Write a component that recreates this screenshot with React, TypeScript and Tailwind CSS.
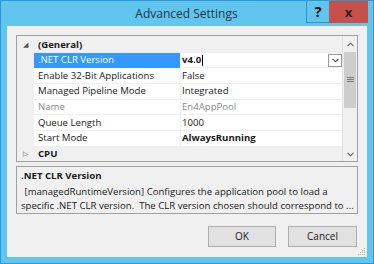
import React from "react";

const rows: { name: string; value: string; selected?: boolean; dim?: boolean; bold?: boolean }[] = [
  { name: ".NET CLR Version", value: "v4.0", selected: true, bold: true },
  { name: "Enable 32-Bit Applications", value: "False" },
  { name: "Managed Pipeline Mode", value: "Integrated" },
  { name: "Name", value: "En4AppPool", dim: true },
  { name: "Queue Length", value: "1000" },
  { name: "Start Mode", value: "AlwaysRunning", bold: true },
];

export default function App() {
  return (
    <div
      className="w-[374px] h-[264px] bg-[#62c5ee] border border-[#2a98da] flex flex-col text-[#1a1a1a]"
      style={{ fontFamily: '"Open Sans", "Noto Sans", sans-serif' }}
    >
      {/* Title bar */}
      <div className="h-[25px] flex items-start shrink-0">
        <div className="flex-1 text-center text-[12px] text-[#1c3448] leading-[25px] pl-[66px]">Advanced Settings</div>
        <div className="flex items-start pr-[5px]">
          <div className="w-[23px] h-[22px] border-l border-b border-[#3a8fbf] flex items-center justify-center text-[15px] font-bold text-[#111] leading-none">?</div>
          <div className="w-[39px] h-[22px] bg-[#c7504b] flex items-center justify-center text-[13px] font-bold text-[#222] leading-none">x</div>
        </div>
      </div>
      {/* Client */}
      <div className="mx-[6px] mb-[6px] flex-1 bg-[#f0f0f0] flex flex-col px-[9px] pt-[9px] relative">
        {/* Property grid */}
        <div className="h-[127px] border border-[#a0a0a0] bg-white flex overflow-hidden">
          <div className="flex-1 flex flex-col text-[9.6px] pt-[1px] bg-[#f0f0f0]">
            <div className="h-[15.7px] shrink-0 flex items-center bg-[#f0f0f0]">
              <div className="w-[17px] flex justify-center text-[7px] text-[#555]">◢</div>
              <div className="font-bold pl-[4px]">(General)</div>
            </div>
            {rows.map((r) => (
              <div key={r.name} className="h-[15.7px] shrink-0 flex bg-white">
                <div className="w-[17px] bg-[#f0f0f0]" />
                <div
                  className={
                    "w-[146px] flex items-center pl-[4px] border-b " +
                    (r.selected ? "bg-[#3399ff] text-white border-[#3399ff]" : "border-[#f0f0f0] ") +
                    (r.dim ? " text-[#8a8a8a]" : "")
                  }
                >
                  {r.name}
                </div>
                <div
                  className={
                    "flex-1 flex items-center pl-[1px] border-b border-l border-[#f0f0f0] " +
                    (r.bold ? "font-bold " : "") +
                    (r.dim ? "text-[#8a8a8a]" : "")
                  }
                >
                  {r.value}
                  {r.selected && (
                    <>
                      <span className="w-px h-[11px] bg-black ml-[1px]" />
                      <span className="ml-auto mr-0 w-[14px] h-[13px] border border-[#9a9a9a] bg-white flex items-center justify-center">
                        <svg width="7" height="5" viewBox="0 0 7 5">
                          <path d="M0.5 0.8 L3.5 3.8 L6.5 0.8" fill="none" stroke="#555" strokeWidth="1.1" />
                        </svg>
                      </span>
                    </>
                  )}
                </div>
              </div>
            ))}
            <div className="h-[15.7px] shrink-0 flex items-center bg-[#f0f0f0]">
              <div className="w-[17px] flex justify-center text-[7px] text-[#555]">▷</div>
              <div className="font-bold pl-[4px]">CPU</div>
            </div>
          </div>
          {/* Scrollbar */}
          <div className="w-[15px] bg-[#f0f0f0] border-l border-[#e3e3e3] flex flex-col">
            <div className="h-[16px] flex items-center justify-center">
              <svg width="7" height="5" viewBox="0 0 7 5">
                <path d="M0.5 4.2 L3.5 1.2 L6.5 4.2" fill="none" stroke="#606060" strokeWidth="1.1" />
              </svg>
            </div>
            <div className="mx-[1px] h-[56px] bg-[#cdcdcd] flex items-center justify-center">
              <svg width="7" height="6" viewBox="0 0 7 6">
                <path d="M0 0.5 H7 M0 2.5 H7 M0 4.5 H7" stroke="#7a7a7a" strokeWidth="1" />
              </svg>
            </div>
            <div className="flex-1" />
            <div className="h-[14px] flex items-center justify-center">
              <svg width="7" height="5" viewBox="0 0 7 5">
                <path d="M0.5 0.8 L3.5 3.8 L6.5 0.8" fill="none" stroke="#606060" strokeWidth="1.1" />
              </svg>
            </div>
          </div>
        </div>
        {/* Description */}
        <div className="mt-[4px] h-[48px] border border-[#a0a0a0] bg-[#f0f0f0] px-[4px] pt-[2px] text-[9.6px] leading-[14px]">
          <div className="font-bold">.NET CLR Version</div>
          <div className="pl-[1px] mt-[2px]">&nbsp;[managedRuntimeVersion] Configures the application pool to load a</div>
          <div className="whitespace-pre">specific .NET CLR version.  The CLR version chosen should correspond to ...</div>
        </div>
        {/* Buttons */}
        <div className="flex justify-end gap-[12px] mt-[12px] pr-[1px]">
          <div className="w-[68px] h-[21px] border border-[#adadad] bg-[#e1e1e1] flex items-center justify-center text-[10px]">OK</div>
          <div className="w-[69px] h-[21px] border border-[#adadad] bg-[#e1e1e1] flex items-center justify-center text-[10px]">Cancel</div>
        </div>
        {/* Resize grip */}
        <svg className="absolute right-[1px] bottom-[1px]" width="8" height="8" viewBox="0 0 8 8">
          <g fill="#b8b8b8">
            <rect x="6" y="0" width="1" height="1" />
            <rect x="4" y="2" width="1" height="1" />
            <rect x="6" y="2" width="1" height="1" />
            <rect x="2" y="4" width="1" height="1" />
            <rect x="4" y="4" width="1" height="1" />
            <rect x="6" y="4" width="1" height="1" />
            <rect x="0" y="6" width="1" height="1" />
            <rect x="2" y="6" width="1" height="1" />
            <rect x="4" y="6" width="1" height="1" />
            <rect x="6" y="6" width="1" height="1" />
          </g>
        </svg>
      </div>
    </div>
  );
}
